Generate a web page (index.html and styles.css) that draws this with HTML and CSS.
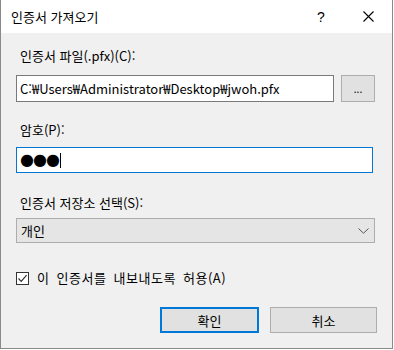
FILE: index.html
```html
<!DOCTYPE html>
<html lang="ko">
<head>
    <meta charset="UTF-8">
    <title>인증서 가져오기</title>
    <link rel="stylesheet" href="styles.css">
</head>
<body>

<div class="window">
    <div class="titlebar">
        <span class="title">인증서 가져오기</span>
        <span class="title-btn help">?</span>
        <span class="title-btn close">
            <svg width="11" height="11" viewBox="0 0 11 11">
                <path d="M0.5 0.5 L10.5 10.5 M10.5 0.5 L0.5 10.5" stroke="#000" stroke-width="1.1" fill="none"/>
            </svg>
        </span>
    </div>

    <div class="content">
        <div class="label label-file">인증서 파일(.pfx)(C):</div>
        <div class="file-row">
            <div class="textbox file-path">C:₩Users₩Administrator₩Desktop₩jwoh.pfx</div>
            <div class="btn browse">...</div>
        </div>

        <div class="label label-pw">암호(P):</div>
        <div class="textbox password"><span class="dots">●●●</span><span class="caret"></span></div>

        <div class="label label-store">인증서 저장소 선택(S):</div>
        <div class="combo">
            <span>개인</span>
            <svg width="11" height="6" viewBox="0 0 11 6">
                <path d="M0.5 0.5 L5.5 5.2 L10.5 0.5" stroke="#555" stroke-width="1" fill="none"/>
            </svg>
        </div>

        <div class="check-row">
            <span class="checkbox">
                <svg width="11" height="11" viewBox="0 0 11 11">
                    <path d="M1.5 5.5 L4.2 8.3 L9.6 2.2" stroke="#333" stroke-width="1.2" fill="none"/>
                </svg>
            </span>
            <span class="check-label">이 인증서를 내보내도록 허용(A)</span>
        </div>

        <div class="buttons">
            <div class="btn ok">확인</div>
            <div class="btn cancel">취소</div>
        </div>
    </div>
</div>

</body>
</html>
```

FILE: styles.css
```css
* {
    box-sizing: border-box;
}
body {
    margin: 0;
    background-color: #fff;
    font-family: "Noto Sans CJK KR", "Liberation Sans", sans-serif;
    font-size: 13px;
    color: #000;
}
.window {
    width: 393px;
    height: 349px;
    background-color: #f0f0f0;
    border: 1px solid #8a8a8a;
    border-top: none;
}
.titlebar {
    height: 33px;
    background-color: #fff;
    display: flex;
    align-items: center;
    padding-left: 10px;
}
.title {
    flex: 1;
    font-size: 13px;
}
.title-btn {
    display: flex;
    align-items: center;
    justify-content: center;
}
.help {
    width: 20px;
    margin-right: 27px;
    font-size: 14px;
    font-family: "Liberation Sans", sans-serif;
}
.close {
    width: 20px;
    margin-right: 14px;
}
.content {
    padding: 15px 0 0 15px;
}
.label {
    line-height: 16px;
    padding-left: 4px;
}
.file-row {
    display: flex;
    margin-top: 11px;
    gap: 7px;
}
.textbox {
    background-color: #fff;
    border: 1px solid #7a7a7a;
    padding-left: 3px;
}
.file-path {
    width: 318px;
    height: 27px;
    line-height: 25px;
    white-space: nowrap;
    overflow: hidden;
}
.btn {
    background-color: #e1e1e1;
    border: 1px solid #adadad;
    display: flex;
    align-items: center;
    justify-content: center;
}
.browse {
    width: 34px;
    height: 27px;
    font-size: 10px;
}
.label-pw {
    margin-top: 20px;
}
.password {
    margin-top: 9px;
    width: 357px;
    height: 26px;
    border-color: #0078d7;
    display: flex;
    align-items: center;
}
.dots {
    font-family: "DejaVu Sans", sans-serif;
    font-size: 16px;
    line-height: 16px;
    letter-spacing: -1px;
}
.caret {
    width: 1px;
    height: 15px;
    background-color: #000;
    margin-left: 1px;
}
.label-store {
    margin-top: 22px;
}
.combo {
    margin-top: 7px;
    width: 359px;
    height: 25px;
    background-color: #e5e5e5;
    border: 1px solid #adadad;
    display: flex;
    align-items: center;
    justify-content: space-between;
    padding: 0 5px 0 4px;
}
.check-row {
    margin-top: 27px;
    height: 16px;
    display: flex;
    align-items: center;
    gap: 8px;
    line-height: 16px;
}
.check-label {
    word-spacing: 3px;
    letter-spacing: 0.5px;
}
.checkbox {
    width: 13px;
    height: 13px;
    border: 1px solid #333;
    background-color: #fff;
    display: flex;
    align-items: center;
    justify-content: center;
}
.buttons {
    margin-top: 21px;
    display: flex;
    gap: 11px;
    padding-left: 144px;
}
.ok {
    width: 99px;
    height: 26px;
    border: 2px solid #0078d7;
}
.cancel {
    width: 107px;
    height: 26px;
}
```
